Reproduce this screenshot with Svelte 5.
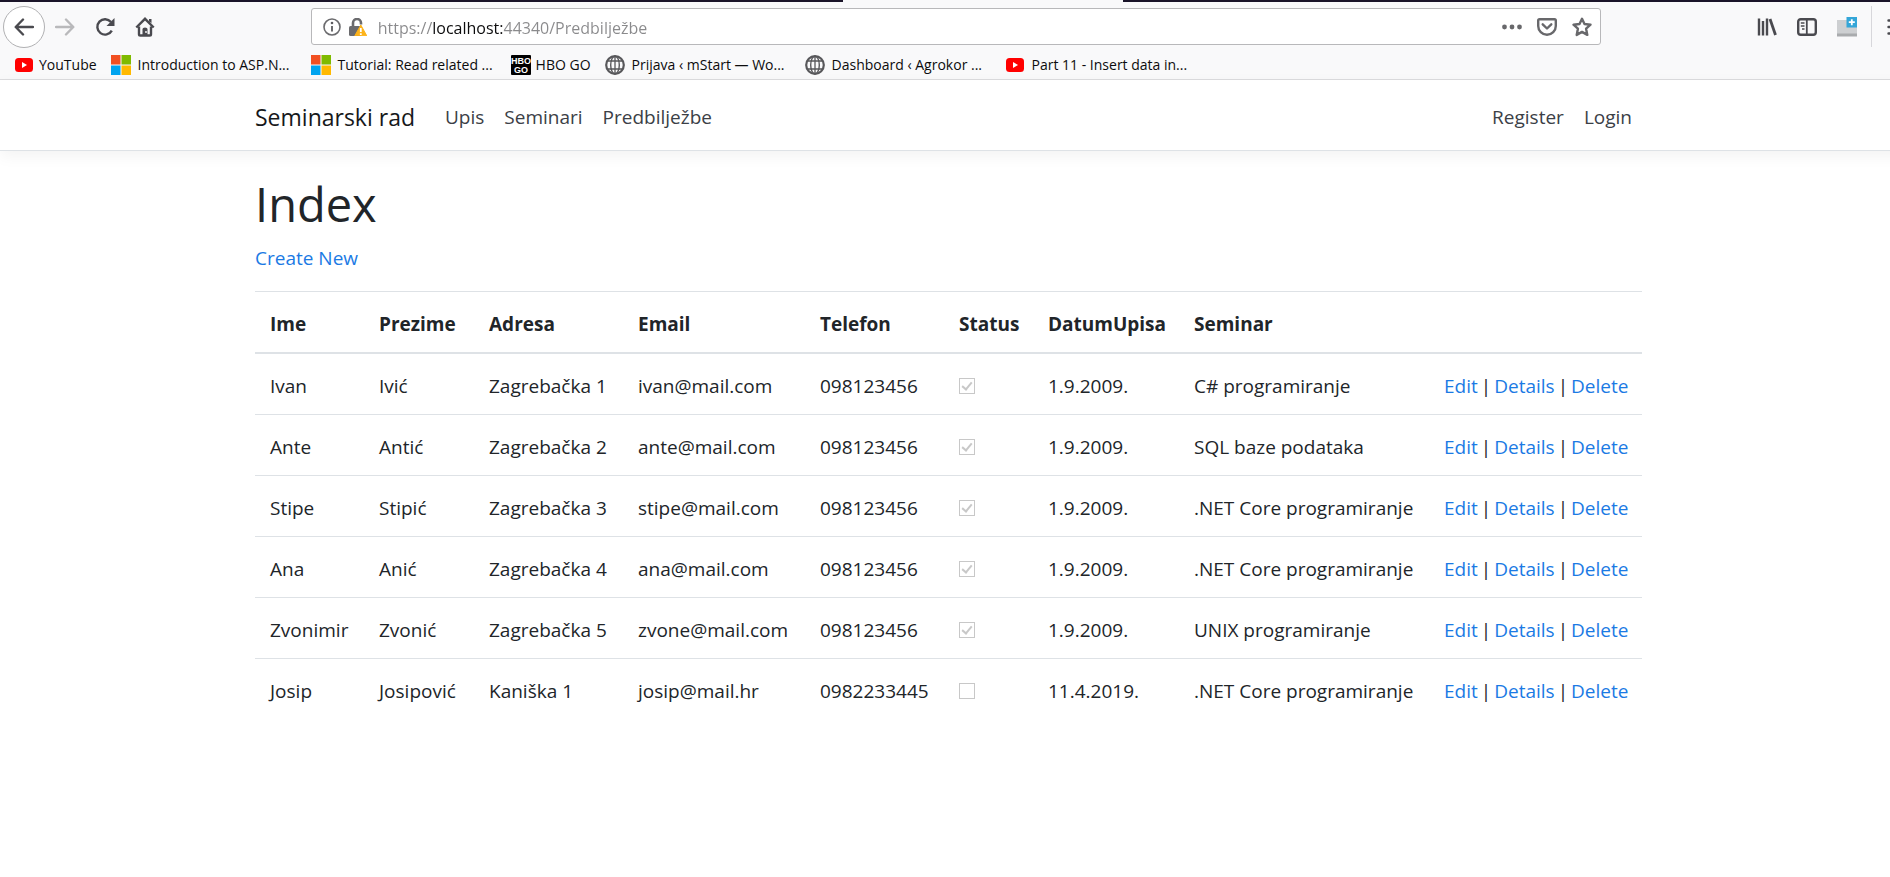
<script>
	const bookmarks = [
		{ icon: 'youtube', title: 'YouTube' },
		{ icon: 'microsoft', title: 'Introduction to ASP.N...', long: true },
		{ icon: 'microsoft', title: 'Tutorial: Read related ...', long: true },
		{ icon: 'hbo', title: 'HBO GO' },
		{ icon: 'globe', title: 'Prijava ‹ mStart — Wo...', long: true },
		{ icon: 'globe', title: 'Dashboard ‹ Agrokor ...', long: true },
		{ icon: 'youtube', title: 'Part 11 - Insert data in...', long: true }
	];

	const columns = ['Ime', 'Prezime', 'Adresa', 'Email', 'Telefon', 'Status', 'DatumUpisa', 'Seminar'];

	const rows = [
		{ ime: 'Ivan', prezime: 'Ivić', adresa: 'Zagrebačka 1', email: 'ivan@mail.com', telefon: '098123456', status: true, datum: '1.9.2009.', seminar: 'C# programiranje' },
		{ ime: 'Ante', prezime: 'Antić', adresa: 'Zagrebačka 2', email: 'ante@mail.com', telefon: '098123456', status: true, datum: '1.9.2009.', seminar: 'SQL baze podataka' },
		{ ime: 'Stipe', prezime: 'Stipić', adresa: 'Zagrebačka 3', email: 'stipe@mail.com', telefon: '098123456', status: true, datum: '1.9.2009.', seminar: '.NET Core programiranje' },
		{ ime: 'Ana', prezime: 'Anić', adresa: 'Zagrebačka 4', email: 'ana@mail.com', telefon: '098123456', status: true, datum: '1.9.2009.', seminar: '.NET Core programiranje' },
		{ ime: 'Zvonimir', prezime: 'Zvonić', adresa: 'Zagrebačka 5', email: 'zvone@mail.com', telefon: '098123456', status: true, datum: '1.9.2009.', seminar: 'UNIX programiranje' },
		{ ime: 'Josip', prezime: 'Josipović', adresa: 'Kaniška 1', email: 'josip@mail.hr', telefon: '0982233445', status: false, datum: '11.4.2019.', seminar: '.NET Core programiranje' }
	];

	let url = $state('https://localhost:44340/Predbilježbe');
</script>

<div class="browser">
	<div class="tab-strip"><span class="tab"></span></div>

	<div class="toolbar">
		<button class="tool back" aria-label="Back">
			<svg viewBox="0 0 20 20"><path d="M19 10H2M9 2.500L1.700 10L9 17.500" /></svg>
		</button>
		<button class="tool forward" aria-label="Forward" disabled>
			<svg viewBox="0 0 20 20"><path d="M1 10H18M11 2.500L18.300 10L11 17.500" /></svg>
		</button>
		<button class="tool" aria-label="Reload">
			<svg viewBox="0 0 20 20">
				<path d="M16.800 13.600A7.700 7.700 0 1 1 16 5" />
				<path class="solid" d="M19.500 1V9H11.500Z" />
			</svg>
		</button>
		<button class="tool" aria-label="Home">
			<svg viewBox="0 0 20 20">
				<path d="M1.300 10.500L10 1.800L18.700 10.500" />
				<path d="M4 9.500V17.200Q4 18.500 5.300 18.500H14.700Q16 18.500 16 17.200V9.500" />
				<path class="solid" d="M7.500 18.500V12Q7.500 10.500 10 10.500T12.500 12V18.500Z" />
				<path class="solid" d="M14 2H16.500V6L14 4.500Z" />
				<circle cx="11" cy="15" r="0.900" fill="#fff" stroke="none" />
			</svg>
		</button>

		<div class="spacer"></div>

		<div class="url-bar">
			<svg class="info" viewBox="0 0 18 18">
				<circle cx="9" cy="9" r="8" />
				<path d="M9 8V13.500" stroke-width="2" />
				<circle cx="9" cy="5" r="1.300" fill="#5c5c60" stroke="none" />
			</svg>
			<svg class="lock" viewBox="0 0 18 18">
				<path d="M4 9V5A4 4 0 0 1 12 5V6.500" fill="none" stroke="#6b6b6e" stroke-width="2.600" />
				<rect x="0" y="8" width="12" height="10" rx="1.500" fill="#6b6b6e" />
				<path d="M11.800 7L17.800 17.800H5.800Z" fill="#fdb31a" stroke="#fdb31a" stroke-linejoin="round" />
				<path d="M11.800 10V14M11.800 15.300V17" stroke="#fff" stroke-width="1.800" />
			</svg>
			<input class="url" type="text" aria-label="Address" bind:value={url} />
			<button class="action" aria-label="Page actions">
				<svg viewBox="0 0 20 20">
					<circle class="solid" cx="2.500" cy="10" r="2.400" />
					<circle class="solid" cx="10" cy="10" r="2.400" />
					<circle class="solid" cx="17.500" cy="10" r="2.400" />
				</svg>
			</button>
			<button class="action" aria-label="Save to Pocket">
				<svg viewBox="0 0 20 20">
					<path d="M2.500 2.200H17.500Q18.800 2.200 18.800 3.500V9A8.800 8.800 0 0 1 1.200 9V3.500Q1.200 2.200 2.500 2.200Z" />
					<path d="M5.700 7.300L10 11.500L14.300 7.300" stroke-linecap="round" stroke-linejoin="round" />
				</svg>
			</button>
			<button class="action" aria-label="Bookmark this page">
				<svg viewBox="0 0 20 20">
					<path stroke-linejoin="round" d="M10 1.800L12.500 7L18.500 7.700L14.100 11.700L15.300 17.900L10 14.900L4.700 17.900L5.900 11.700L1.500 7.700L7.500 7Z" />
				</svg>
			</button>
		</div>

		<div class="spacer"></div>

		<button class="tool" aria-label="Library">
			<svg viewBox="0 0 20 20">
				<path d="M2 1.500V18.500M6 4V18.500M10 1.500V18.500" />
				<path d="M13 2L18.500 18" stroke-width="2.800" />
			</svg>
		</button>
		<button class="tool" aria-label="Sidebars">
			<svg viewBox="0 0 20 20">
				<rect x="1.200" y="2.200" width="17.600" height="15.600" rx="2.500" />
				<path d="M9.800 2V18" stroke-width="1.800" />
				<path d="M3.800 6H7.500M3.800 9H7.500M5 12H7.500" stroke-width="1.400" />
			</svg>
		</button>
		<button class="tool" aria-label="Screen capture">
			<svg viewBox="0 0 20 20">
				<rect x="0" y="3" width="20" height="14" fill="#cdcfd1" stroke="none" />
				<rect x="0" y="16.500" width="20" height="3" fill="#a9abad" stroke="none" />
				<rect x="9.500" y="0" width="10.500" height="10.500" fill="#34a6d8" stroke="none" />
				<path d="M14.800 2.200V8.200M11.800 5.200H17.800" stroke="#fff" stroke-width="1.800" />
			</svg>
		</button>
		<span class="separator"></span>
		<button class="tool menu" aria-label="Open menu">
			<svg viewBox="0 0 20 20"><path stroke-linecap="round" d="M1.500 3.500H18.500M1.500 10H18.500M1.500 16.500H18.500" /></svg>
		</button>
	</div>

	<div class="bookmarks">
		{#each bookmarks as bookmark}
			<a class="bookmark" class:long={bookmark.long} href="#bookmark">
				<svg viewBox="0 0 20 20">
					{#if bookmark.icon === 'youtube'}
						<rect x="1" y="3" width="18" height="14" rx="3.500" fill="#f00" />
						<path d="M8 7L13 10L8 13Z" fill="#fff" />
					{:else if bookmark.icon === 'microsoft'}
						<rect width="9.500" height="9.500" fill="#f25022" />
						<rect x="10.500" width="9.500" height="9.500" fill="#7fba00" />
						<rect y="10.500" width="9.500" height="9.500" fill="#00a4ef" />
						<rect x="10.500" y="10.500" width="9.500" height="9.500" fill="#ffb900" />
					{:else if bookmark.icon === 'hbo'}
						<rect width="20" height="20" rx="1" fill="#000" />
						<text x="10" y="9" text-anchor="middle" class="logo-text">HBO</text>
						<text x="10" y="18" text-anchor="middle" class="logo-text">GO</text>
					{:else}
						<g fill="none" stroke="#58585b">
							<circle cx="10" cy="10" r="8.800" stroke-width="2.200" />
							<ellipse cx="10" cy="10" rx="4.300" ry="8.800" stroke-width="1.400" />
							<path d="M10 1V19M2.500 6H17.500M2.500 14H17.500" stroke-width="1.300" />
						</g>
					{/if}
				</svg>
				<span>{bookmark.title}</span>
			</a>
		{/each}
	</div>

	<div class="page">
		<header>
			<nav class="container">
				<a class="brand" href="#home">Seminarski rad</a>
				<a class="nav-link" href="#upis">Upis</a>
				<a class="nav-link" href="#seminari">Seminari</a>
				<a class="nav-link" href="#predbiljezbe">Predbilježbe</a>
				<a class="nav-link first-right" href="#register">Register</a>
				<a class="nav-link" href="#login">Login</a>
			</nav>
		</header>

		<main class="container">
			<h1>Index</h1>
			<p><a href="#create">Create New</a></p>

			<table>
				<colgroup>
					<col class="w-ime" />
					<col class="w-prezime" />
					<col class="w-adresa" />
					<col class="w-email" />
					<col class="w-telefon" />
					<col class="w-status" />
					<col class="w-datum" />
					<col class="w-seminar" />
					<col class="w-actions" />
				</colgroup>
				<thead>
					<tr>
						{#each columns as column}
							<th>{column}</th>
						{/each}
						<th></th>
					</tr>
				</thead>
				<tbody>
					{#each rows as row}
						<tr>
							<td>{row.ime}</td>
							<td>{row.prezime}</td>
							<td>{row.adresa}</td>
							<td>{row.email}</td>
							<td>{row.telefon}</td>
							<td><input type="checkbox" aria-label="Status" checked={row.status} disabled /></td>
							<td>{row.datum}</td>
							<td>{row.seminar}</td>
							<td>
								<div class="row-links">
									<a href="#edit">Edit</a> | <a href="#details">Details</a> | <a href="#delete">Delete</a>
								</div>
							</td>
						</tr>
					{/each}
				</tbody>
			</table>
		</main>
	</div>
</div>

<style>
	:global(body) {
		background: #fff;
		overflow-x: hidden;
	}
	/* the window runs a little past the right edge of the screen */
	.browser {
		margin-right: -24px;
		font-family: 'Open Sans', 'Noto Sans', sans-serif;
		color: #212529;
	}
	a { color: #1b7ae4; text-decoration: none; }
	button {
		display: flex; align-items: center; justify-content: center;
		flex: none; padding: 0; border: none; background: none;
	}
	svg { display: block; flex: none; width: 20px; height: 20px; }

	.tab-strip {
		display: grid; grid-template-columns: 843fr 280fr 791fr;
		height: 2px; background: #1a1429;
	}
	.tab { grid-column: 2; background: #f9f9fa; }

	.toolbar {
		display: flex; align-items: center;
		height: 49px; padding-left: 3px;
		background: #f9f9fa;
	}
	.tool { width: 40px; height: 40px; }
	.tool svg, .action svg { fill: none; stroke: #4a4a4f; stroke-width: 2.4; }
	.action svg { stroke: #68686b; }
	.tool .solid { fill: #4a4a4f; stroke: none; }
	.action .solid { fill: #68686b; stroke: none; }
	.back {
		box-sizing: border-box; width: 42px; height: 42px;
		border: 1px solid #b1b1b3; border-radius: 50%; background: #fff;
	}
	.forward svg { stroke: #b9b9bb; }
	.back svg, .forward svg { stroke-linecap: round; stroke-linejoin: round; }
	.spacer { flex: 147; }
	.separator {
		width: 1px; height: 41px; margin: 0 8px 0 4px;
		background: #d7d7db;
	}
	.menu { width: 34px; }

	.url-bar {
		display: flex; align-items: center; flex: 1288;
		box-sizing: border-box; height: 37px; padding: 0 1px 0 11px;
		border: 1px solid #b8b8ba; border-radius: 3px; background: #fff;
	}
	.info, .lock { width: 18px; height: 18px; }
	.info { margin-right: 8px; fill: none; stroke: #6b6b6e; stroke-width: 1.6; }
	.url {
		flex: 1; min-width: 0; margin-left: 11px; padding: 2px 0 0;
		border: none; outline: none;
		font: 16px/30px 'Open Sans', 'Noto Sans', sans-serif;
		/* host name is dark, the rest of the address is dimmed */
		background: linear-gradient(90deg, #8a8a8c 55px, #0c0c0d 55px 125px, #8a8a8c 125px);
		background-clip: text;
		color: transparent;
	}
	.action { width: 35px; height: 35px; }

	.bookmarks {
		display: flex; align-items: center;
		height: 28px; padding-left: 14px;
		background: #f9f9fa; border-bottom: 1px solid #dcdcde;
	}
	.bookmark {
		display: flex; align-items: center; gap: 5px;
		box-sizing: border-box; padding-right: 14px;
		font-size: 14px; line-height: 20px; white-space: nowrap;
		color: #0c0c0d;
	}
	.bookmark.long { width: 200px; gap: 7px; }
	.logo-text {
		font: bold 9px 'Liberation Sans', sans-serif;
		fill: #fff;
	}

	.page { padding-right: 17px; }
	.container {
		box-sizing: border-box; max-width: 1425px;
		margin: 0 auto; padding: 0 19px;
	}
	header {
		margin-right: -17px; padding-right: 17px; margin-bottom: 20px;
		border-bottom: 1px solid #dee2e6;
		box-shadow: 0 5px 15px rgba(0, 0, 0, 0.05);
	}
	nav {
		display: flex; align-items: center;
		height: 70px;
	}
	.brand {
		margin-right: 20px; padding: 4px 0 0;
		font-size: 23px; line-height: 38px; color: #16181a;
	}
	.nav-link {
		padding: 14px 10px 10px;
		font-size: 19px; line-height: 30px; color: #3b4046;
	}
	.first-right { margin-left: auto; }

	h1 {
		margin: 0 0 9px; padding-top: 3px;
		font-size: 47px; line-height: 60px; font-weight: 400;
	}
	p { margin: 0 0 18px; font-size: 19px; line-height: 30px; }

	table {
		width: 100%; table-layout: fixed; border-spacing: 0;
		font-size: 19px; line-height: 30px;
	}
	.w-ime { width: 109px; }
	.w-prezime { width: 110px; }
	.w-adresa { width: 149px; }
	.w-email { width: 182px; }
	.w-telefon { width: 139px; }
	.w-status { width: 89px; }
	.w-datum { width: 146px; }
	.w-seminar { width: 250px; }
	.w-actions { width: 213px; }
	th, td {
		height: 30px; padding: 17px 0 13px 15px;
		border-top: 1px solid #dee2e6;
		text-align: left; white-space: nowrap;
	}
	th { border-bottom: 2px solid #dee2e6; font-weight: 700; }
	tbody tr:first-child td { border-top: none; }
	.row-links { display: flex; gap: 3px; }
	td input {
		appearance: none; display: block;
		box-sizing: border-box; width: 16px; height: 16px; margin: 0;
		border: 1px solid #c8c8c8; background: #fff;
	}
	td input:checked::before {
		content: ''; display: block;
		width: 4px; height: 8px; margin: 1px 0 0 4px;
		border: solid #c8c8c8; border-width: 0 2px 2px 0;
		transform: rotate(40deg);
	}
</style>
